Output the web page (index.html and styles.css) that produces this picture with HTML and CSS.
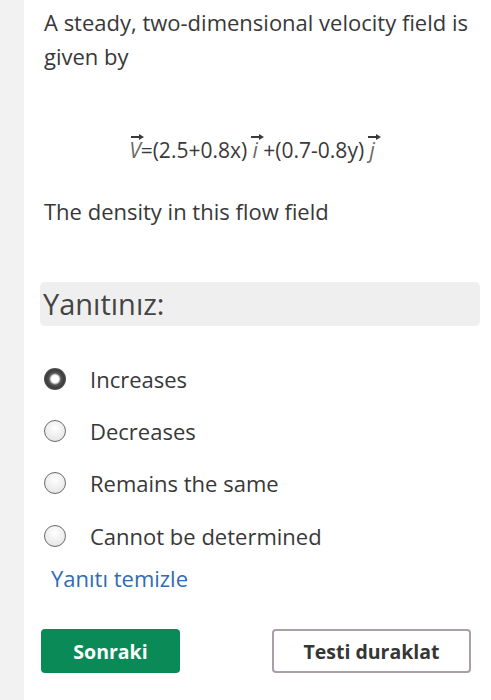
FILE: index.html
```html
<!DOCTYPE html>
<html>
<head>
<meta charset="utf-8">
<link rel="stylesheet" href="styles.css">
</head>
<body>
<div class="page">
  <div class="strip"></div>
  <main class="content">
    <p class="question first">A steady, two-dimensional velocity field is given by</p>
    <p class="equation"><span class="vec">V</span>=(2.5+0.8x)&nbsp;<span class="vec">i</span>&nbsp;+(0.7-0.8y)&nbsp;<span class="vec">j</span></p>
    <p class="question">The density in this flow field</p>
    <div class="answer-head">Yanıtınız:</div>
    <ul class="options">
      <li class="option"><span class="radio checked"></span><span class="label">Increases</span></li>
      <li class="option"><span class="radio"></span><span class="label">Decreases</span></li>
      <li class="option"><span class="radio"></span><span class="label">Remains the same</span></li>
      <li class="option"><span class="radio"></span><span class="label">Cannot be determined</span></li>
    </ul>
    <a class="clear" href="#">Yanıtı temizle</a>
    <div class="buttons">
      <button class="btn primary">Sonraki</button>
      <button class="btn secondary">Testi duraklat</button>
    </div>
  </main>
</div>
</body>
</html>
```
FILE: styles.css
```css
html, body {
  margin: 0;
  padding: 0;
  background: #ffffff;
}
body {
  font-family: "Open Sans", "DejaVu Sans", sans-serif;
  color: #383838;
}
.page {
  display: flex;
  min-height: 700px;
}
.strip {
  width: 24px;
  flex: none;
  background: #f2f2f2;
}
.content {
  flex: 1;
  padding: 5px 11px 0 16px;
}
.question {
  margin: 0;
  padding-left: 4px;
  font-size: 22px;
  line-height: 34px;
}
.equation {
  margin: 62px 0 29px;
  text-align: center;
  font-size: 21px;
  line-height: 30px;
  padding-right: 16px;
  color: #3a3a3a;
}
.vec {
  position: relative;
  display: inline-block;
  font-style: italic;
  color: #6a6a6a;
}
.vec::before {
  content: "";
  position: absolute;
  left: 50%;
  top: 1px;
  width: 10px;
  height: 2px;
  margin-left: -4px;
  background: #3a3a3a;
}
.vec::after {
  content: "";
  position: absolute;
  left: 50%;
  top: -1px;
  margin-left: 4px;
  border-left: 5px solid #3a3a3a;
  border-top: 3px solid transparent;
  border-bottom: 3px solid transparent;
}
.answer-head {
  margin-top: 54px;
  background: #efefef;
  border-radius: 5px;
  height: 44px;
  line-height: 44px;
  padding-left: 3px;
  font-size: 29px;
  color: #444;
}
.options {
  list-style: none;
  margin: 38px 0 0;
  padding: 0;
  display: flex;
  flex-direction: column;
  gap: 23.4px;
}
.option {
  display: flex;
  align-items: center;
  height: 29px;
}
.radio {
  width: 22px;
  height: 22px;
  box-sizing: border-box;
  border-radius: 50%;
  border: 1.5px solid #6b6b6b;
  background: radial-gradient(circle at 50% 35%, #ffffff 0%, #e9e9e9 70%, #d9d9d9 100%);
  margin-left: 4px;
  flex: none;
}
.radio.checked {
  border: none;
  background: radial-gradient(circle, #ffffff 0 3.5px, #c9c9c9 4.5px, #555 6px, #3c3c3c 9px, #555 11px);
}
.label {
  margin-left: 24px;
  font-size: 22px;
  color: #383838;
}
.clear {
  display: block;
  margin-top: 13px;
  margin-left: 11px;
  font-size: 22px;
  line-height: 30px;
  color: #2e6cb5;
  text-decoration: none;
}
.buttons {
  display: flex;
  justify-content: space-between;
  margin-top: 36px;
  padding-left: 1px;
  padding-right: 9px;
}
.btn {
  font-family: "Open Sans", "DejaVu Sans", sans-serif;
  font-weight: 700;
  font-size: 19.5px;
  height: 44px;
  border-radius: 4px;
  box-sizing: border-box;
}
.primary {
  width: 139px;
  background: #0a8a57;
  color: #ffffff;
  border: none;
}
.secondary {
  width: 199px;
  background: #ffffff;
  color: #363636;
  border: 2px solid #a99fa8;
}
```
